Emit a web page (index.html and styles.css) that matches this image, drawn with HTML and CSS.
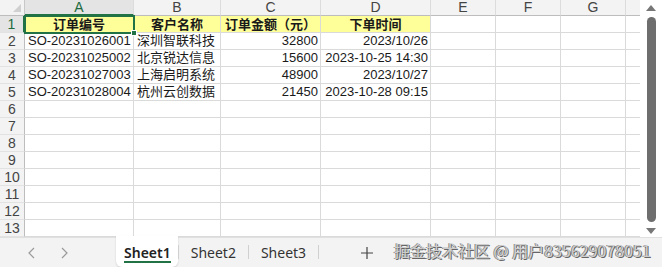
FILE: index.html
```html
<!DOCTYPE html>
<html lang="zh">
<head>
<meta charset="utf-8">
<link rel="stylesheet" href="styles.css">
</head>
<body>
<div class="app">
  <div class="main">
    <div class="sheet">
      <div class="c corner"><span class="tri"></span></div>
      <div class="c ch sel-col">A</div><div class="c ch">B</div><div class="c ch">C</div><div class="c ch">D</div><div class="c ch">E</div><div class="c ch">F</div><div class="c ch">G</div><div class="c ch last"></div>

      <div class="c rh sel-row">1</div><div class="c hd active">订单编号<span class="handle"></span></div><div class="c hd">客户名称</div><div class="c hd">订单金额（元）</div><div class="c hd">下单时间</div><div class="c"></div><div class="c"></div><div class="c"></div><div class="c last"></div>

      <div class="c rh">2</div><div class="c l">SO-20231026001</div><div class="c l">深圳智联科技</div><div class="c r">32800</div><div class="c r">2023/10/26</div><div class="c"></div><div class="c"></div><div class="c"></div><div class="c last"></div>

      <div class="c rh">3</div><div class="c l">SO-20231025002</div><div class="c l">北京锐达信息</div><div class="c r">15600</div><div class="c r">2023-10-25 14:30</div><div class="c"></div><div class="c"></div><div class="c"></div><div class="c last"></div>

      <div class="c rh">4</div><div class="c l">SO-20231027003</div><div class="c l">上海启明系统</div><div class="c r">48900</div><div class="c r">2023/10/27</div><div class="c"></div><div class="c"></div><div class="c"></div><div class="c last"></div>

      <div class="c rh">5</div><div class="c l">SO-20231028004</div><div class="c l">杭州云创数据</div><div class="c r">21450</div><div class="c r">2023-10-28 09:15</div><div class="c"></div><div class="c"></div><div class="c"></div><div class="c last"></div>

      <div class="c rh">6</div><div class="c"></div><div class="c"></div><div class="c"></div><div class="c"></div><div class="c"></div><div class="c"></div><div class="c"></div><div class="c last"></div>
      <div class="c rh">7</div><div class="c"></div><div class="c"></div><div class="c"></div><div class="c"></div><div class="c"></div><div class="c"></div><div class="c"></div><div class="c last"></div>
      <div class="c rh">8</div><div class="c"></div><div class="c"></div><div class="c"></div><div class="c"></div><div class="c"></div><div class="c"></div><div class="c"></div><div class="c last"></div>
      <div class="c rh">9</div><div class="c"></div><div class="c"></div><div class="c"></div><div class="c"></div><div class="c"></div><div class="c"></div><div class="c"></div><div class="c last"></div>
      <div class="c rh">10</div><div class="c"></div><div class="c"></div><div class="c"></div><div class="c"></div><div class="c"></div><div class="c"></div><div class="c"></div><div class="c last"></div>
      <div class="c rh">11</div><div class="c"></div><div class="c"></div><div class="c"></div><div class="c"></div><div class="c"></div><div class="c"></div><div class="c"></div><div class="c last"></div>
      <div class="c rh">12</div><div class="c"></div><div class="c"></div><div class="c"></div><div class="c"></div><div class="c"></div><div class="c"></div><div class="c"></div><div class="c last"></div>
      <div class="c rh">13</div><div class="c"></div><div class="c"></div><div class="c"></div><div class="c"></div><div class="c"></div><div class="c"></div><div class="c"></div><div class="c last"></div>
    </div>
    <div class="vscroll">
      <span class="arrow up"></span>
      <span class="thumb"></span>
      <span class="arrow down"></span>
    </div>
  </div>
  <div class="tabbar">
    <div class="nav">
      <svg width="10" height="12" viewBox="0 0 10 12"><path d="M7 1 L2 6 L7 11" fill="none" stroke="#9a9a9a" stroke-width="1.2"/></svg>
      <svg width="10" height="12" viewBox="0 0 10 12"><path d="M3 1 L8 6 L3 11" fill="none" stroke="#9a9a9a" stroke-width="1.2"/></svg>
    </div>
    <div class="tab active"><span>Sheet1</span></div>
    <span class="sep"></span>
    <div class="tab"><span>Sheet2</span></div>
    <span class="sep"></span>
    <div class="tab"><span>Sheet3</span></div>
    <span class="sep"></span>
    <div class="plus">
      <svg width="12" height="12" viewBox="0 0 12 12"><path d="M6 0 V12 M0 6 H12" stroke="#444" stroke-width="1.2"/></svg>
    </div>
    <div class="watermark">掘金技术社区 @ 用户835629078051</div>
  </div>
</div>
</body>
</html>
```

FILE: styles.css
```css
* { box-sizing: border-box; margin: 0; padding: 0; }
html, body { width: 662px; height: 267px; overflow: hidden; background: #fff; }
body { font-family: "Liberation Sans", Arial, "Noto Sans CJK SC", sans-serif; font-size: 13px; color: #1a1a1a; }
.app { display: flex; flex-direction: column; width: 662px; height: 267px; }
.main { display: flex; height: 237px; }
.sheet {
  display: grid;
  grid-template-columns: 25px 109px 87px 100px 110px 65px 65px 65px 14px;
  grid-template-rows: 16px repeat(13, 17px);
  width: 640px;
  position: relative;
}
.c {
  border-right: 1px solid #dadada;
  border-bottom: 1px solid #dadada;
  line-height: 16px;
  white-space: nowrap;
  overflow: visible;
  position: relative;
}
.c.last { border-right: none; }
.corner { background: #f3f3f3; border-right: 1px solid #c8c8c8; border-bottom: 1px solid #bdbdbd; }
.tri { position: absolute; right: 3px; bottom: 3px; width: 0; height: 0; border-left: 8px solid transparent; border-bottom: 8px solid #d0d0d0; }
.ch {
  background: #f3f3f3;
  color: #444;
  text-align: center;
  font-size: 14px;
  line-height: 15px;
  border-right: 1px solid #dcdcdc;
  border-bottom: 1px solid #bdbdbd;
}
.ch.sel-col { background: #e4e4e4; color: #1e6b41; border-bottom: 2px solid #217346; }
.rh {
  background: #f3f3f3;
  color: #444;
  text-align: center;
  font-size: 14px;
  border-right: 1px solid #bdbdbd;
  border-bottom: 1px solid #e2e2e2;
}
.rh.sel-row { background: #e4e4e4; color: #1e6b41; border-right: 2px solid #217346; }
.hd { background: #ffff99; font-weight: bold; text-align: center; font-family: "Noto Sans CJK SC", sans-serif; font-size: 13px; line-height: 16px; }
.hd.active { outline: 2px solid #217346; outline-offset: -1px; z-index: 2; }
.handle { position: absolute; right: -4px; bottom: -4px; width: 6px; height: 6px; background: #217346; border: 1px solid #fff; }
.l { padding-left: 3px; font-family: "Liberation Sans", "Noto Sans CJK SC", sans-serif; }
.r { text-align: right; padding-right: 2px; }
.vscroll {
  width: 22px;
  background: #fff;
  display: flex;
  flex-direction: column;
  align-items: center;
  padding: 5px 0 3px;
}
.arrow { width: 0; height: 0; border-left: 5px solid transparent; border-right: 5px solid transparent; }
.arrow.up { border-bottom: 6px solid #777; }
.arrow.down { border-top: 6px solid #777; }
.thumb { width: 9px; flex: 1; margin: 6px 0 6px; background: #6e6e6e; border-radius: 5px; }
.tabbar {
  height: 30px;
  background: #f3f3f3;
  display: flex;
  align-items: stretch;
  position: relative;
  border-top: 1px solid #e0e0e0;
}
.nav { width: 116px; display: flex; align-items: center; gap: 22px; padding-left: 27px; }
.tab { display: flex; align-items: center; padding: 0 12px; font-size: 14px; color: #333; font-family: "Noto Sans", "Liberation Sans", sans-serif; }
.tab.active {
  background: #fff;
  margin-top: -2px;
  border-radius: 0 0 6px 6px;
  box-shadow: 0 1px 2px rgba(0,0,0,0.15);
  padding: 0 7px 0 8px;
  font-weight: 600;
  color: #222;
}
.tab.active span { border-bottom: 2px solid #217346; line-height: 17px; margin-top: 3px; }
.sep { width: 1px; background: #d0d0d0; margin: 7px 0 8px; }
.plus { display: flex; align-items: center; padding-left: 42px; }
.watermark {
  position: absolute;
  left: 394px;
  top: 0;
  font-size: 16px;
  color: #cdcdcd;
  font-family: "Noto Sans CJK SC", sans-serif;
  text-shadow: 1px 1px 0 #666, -1px 0 0 #888;
  white-space: nowrap;
}
```
